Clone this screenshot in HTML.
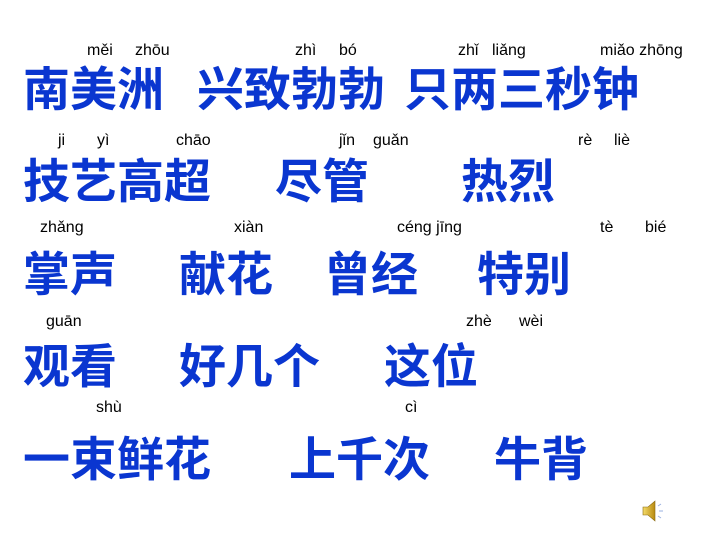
<!DOCTYPE html>
<html><head><meta charset="utf-8"><style>
body{margin:0;width:720px;height:540px;background:#fff;position:relative;overflow:hidden}
.c{position:absolute;font-family:"Liberation Sans","Noto Sans CJK SC",sans-serif;font-weight:bold;font-size:47px;line-height:47px;color:#0a36d0;white-space:nowrap}
.p{position:absolute;font-family:"Liberation Sans",sans-serif;font-size:16px;line-height:16px;color:#000;white-space:nowrap}
</style></head><body>
<div class="p" style="left:87px;top:43px">měi</div>
<div class="p" style="left:135px;top:43px">zhōu</div>
<div class="p" style="left:295px;top:43px">zhì</div>
<div class="p" style="left:339px;top:43px">bó</div>
<div class="p" style="left:458px;top:43px">zhǐ</div>
<div class="p" style="left:492px;top:43px">liǎng</div>
<div class="p" style="left:600px;top:43px">miǎo zhōng</div>
<div class="c" style="left:23px;top:66px">南美洲</div>
<div class="c" style="left:197px;top:66px">兴致勃勃</div>
<div class="c" style="left:404px;top:66px">只两三秒钟</div>

<div class="p" style="left:58px;top:133px">ji</div>
<div class="p" style="left:97px;top:133px">yì</div>
<div class="p" style="left:176px;top:133px">chāo</div>
<div class="p" style="left:339px;top:133px">jǐn</div>
<div class="p" style="left:373px;top:133px">guǎn</div>
<div class="p" style="left:578px;top:133px">rè</div>
<div class="p" style="left:614px;top:133px">liè</div>
<div class="c" style="left:23px;top:158px">技艺高超</div>
<div class="c" style="left:275px;top:158px">尽管</div>
<div class="c" style="left:461px;top:158px">热烈</div>

<div class="p" style="left:40px;top:220px">zhǎng</div>
<div class="p" style="left:234px;top:220px">xiàn</div>
<div class="p" style="left:397px;top:220px">céng jīng</div>
<div class="p" style="left:600px;top:220px">tè</div>
<div class="p" style="left:645px;top:220px">bié</div>
<div class="c" style="left:23px;top:251px">掌声</div>
<div class="c" style="left:179px;top:251px">献花</div>
<div class="c" style="left:324px;top:251px">曾经</div>
<div class="c" style="left:477px;top:251px">特别</div>

<div class="p" style="left:46px;top:314px">guān</div>
<div class="p" style="left:466px;top:314px">zhè</div>
<div class="p" style="left:519px;top:314px">wèi</div>
<div class="c" style="left:23px;top:343px">观看</div>
<div class="c" style="left:179px;top:343px">好几个</div>
<div class="c" style="left:384px;top:343px">这位</div>

<div class="p" style="left:96px;top:400px">shù</div>
<div class="p" style="left:405px;top:400px">cì</div>
<div class="c" style="left:23px;top:436px">一束鲜花</div>
<div class="c" style="left:289px;top:436px">上千次</div>
<div class="c" style="left:494px;top:436px">牛背</div>

<svg style="position:absolute;left:640px;top:498px" width="26" height="26" viewBox="0 0 26 26">
<defs><linearGradient id="g" x1="0" x2="1"><stop offset="0" stop-color="#f5dc6a"/><stop offset="1" stop-color="#b88a10"/></linearGradient></defs>
<path d="M3 9h5l7-6v20l-7-6H3z" fill="url(#g)" stroke="#8a6a10" stroke-width="0.6"/>
<path d="M18 8l3-2M19 13h4M18 18l3 2" stroke="#9ab0e0" stroke-width="1"/>
</svg>
</body></html>
